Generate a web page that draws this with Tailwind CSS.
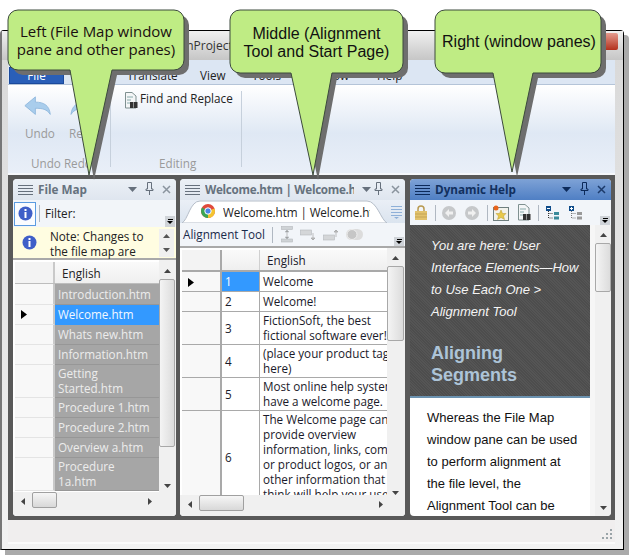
<!DOCTYPE html>
<html lang="en">
<head>
  <meta charset="UTF-8" />
  <title>Window panes</title>
  <script src="https://cdn.jsdelivr.net/npm/@tailwindcss/browser@4"></script>
</head>
<body class="bg-white">
<div class="relative w-[629px] h-[556px] overflow-hidden font-['Open_Sans',sans-serif] text-[11.7px] text-black">

  <!-- shadow + window -->
  <div class="mt-[30px] ml-0 w-[624px] h-[520px] border border-l-[2px] border-black border-l-[#777] bg-[linear-gradient(#d8d8d8,#f2f2f2)] rounded-t-[4px] shadow-[5px_5px_0_#aaaaaa] flex flex-col pl-[6px] pr-[8px]">

    <!-- title bar -->
    <div class="h-[29px] shrink-0 relative bg-[linear-gradient(#f0f0f0,#c6c6c6)] -ml-[6px] -mr-[8px] px-[8px]">
      <div class="pl-[156px] pt-[6px] text-[#333] text-[12px]">AlignProject</div>
      <div class="absolute left-[598px] top-[2px] w-[18px] h-[17px] rounded-[2px] bg-[linear-gradient(#e49b8e,#b3301d)]"></div>
    </div>

    <!-- ribbon tabs -->
    <div class="h-[25px] shrink-0 bg-[#dce6f3] border-b border-[#b4c4d8] flex items-end relative">
      <div class="ml-[1px] w-[55px] h-[17px] bg-[#2a5fb8] border border-[#1b4a9c] text-white text-center leading-[15px]">File</div>
      <div class="absolute left-[119px] top-[7px] text-[#222]">Translate</div>
      <div class="absolute left-[192px] top-[7px] text-[#222]">View</div>
      <div class="absolute left-[244px] top-[7px] text-[#222]">Tools</div>
      <div class="absolute left-[297px] top-[7px] text-[#222]">Window</div>
      <div class="absolute left-[369px] top-[7px] text-[#222]">Help</div>
    </div>

    <!-- ribbon -->
    <div class="h-[90px] shrink-0 flex border-b-[2px] border-[#f6f8fb] bg-[linear-gradient(#ffffff,#dfe8f4_55%,#e9eff8)]">
      <div class="w-[103px] shrink-0 relative border-r border-[#c6d0dc] my-[6px]">
        <svg class="absolute left-[15px] top-[5px]" width="30" height="21" viewBox="0 0 32 24"><path d="M1 11 L13 1 V7 C23 7 29 11 30 21 C26 15 21 14 13 14 V21 Z" fill="#a9cdec" stroke="#8db6dc"/></svg>
        <svg class="absolute left-[60px] top-[5px]" width="20" height="21" viewBox="0 0 20 24"><path d="M2 21 C3 11 9 7 19 7 V14 C11 14 6 15 2 21 Z" fill="#a9cdec" stroke="#8db6dc"/></svg>
        <div class="absolute left-[17px] top-[34px] text-[#9a9a9a]">Undo</div>
        <div class="absolute left-[61px] top-[34px] text-[#9a9a9a]">Redo</div>
        <div class="absolute left-[23px] top-[64px] text-[#9a9a9a] whitespace-nowrap">Undo Redo</div>
      </div>
      <div class="w-[131px] shrink-0 relative border-r border-[#c6d0dc] my-[6px]">
        <svg class="absolute left-[13px] top-[1px]" width="15" height="17" viewBox="0 0 15 17"><path d="M1.500 .5 H8 L12 4 V16 H1.500 Z" fill="#f4f6f7" stroke="#7f9090"/><path d="M3 5 H9 M3 8 H7 M3 11 H6" stroke="#8aa"/><rect x="6" y="10" width="3.500" height="6" fill="#333"/><rect x="10" y="10" width="3.500" height="6" fill="#333"/></svg>
        <div class="absolute left-[29px] top-[-1px] text-[#222] whitespace-nowrap">Find and Replace</div>
        <div class="absolute left-[48px] top-[64px] text-[#9a9a9a]">Editing</div>
      </div>
    </div>

    <!-- pane area -->
    <div class="h-[345px] shrink-0 bg-[#595959] flex gap-[4px] pl-[5px] pr-[5px] pt-[4px] pb-[4px]">

      <!-- left pane -->
      <div class="w-[163px] shrink-0 bg-[#f0f3f7] rounded-[4px] flex flex-col overflow-hidden">
        <div class="h-[21px] shrink-0 flex items-center bg-[linear-gradient(#ebf0f6,#dfe6ef)] relative">
          <svg class="ml-[5px]" width="15" height="12" viewBox="0 0 15 12"><path d="M0 1.500H15M0 4.500H15M0 7.500H15M0 10.500H15" stroke="#66707c"/></svg>
          <span class="ml-[5px] font-bold text-[#66727e]">File Map</span>
          <svg class="absolute left-[115px] top-[8px]" width="9" height="5"><path d="M0 0H9L4.500 5Z" fill="#66707c"/></svg>
          <svg class="absolute left-[132px] top-[3px]" width="9" height="13" viewBox="0 0 9 13"><path d="M2.500 .5H6.500V7H8V8.500H1V7H2.500ZM4.500 8.500V13" fill="none" stroke="#66707c"/></svg>
          <svg class="absolute left-[149px] top-[6px]" width="9" height="9" viewBox="0 0 9 9"><path d="M1 1L8 8M8 1L1 8" stroke="#8a949e" stroke-width="1.500"/></svg>
        </div>
        <div class="h-[27px] shrink-0 flex items-center bg-[#f2f5f9] relative">
          <div class="ml-[1px] w-[22px] h-[24px] border border-[#5b9be0] bg-[#fafcff] flex items-center justify-center">
            <svg width="15" height="15" viewBox="0 0 15 15"><circle cx="7.500" cy="7.500" r="7" fill="#3f5fc8"/><rect x="6.500" y="3" width="2" height="2" fill="#fff"/><rect x="6.500" y="6" width="2" height="6" fill="#fff"/></svg>
          </div>
          <div class="ml-[3px] w-px h-[17px] bg-[#b0b8c2]"></div>
          <span class="ml-[5px] text-[#222]">Filter:</span>
          <div class="absolute right-[1px] bottom-0 w-[10px] h-[11px] bg-[#cfd3d8] flex flex-col items-center justify-center gap-[1px]">
            <div class="w-[5px] h-px bg-black"></div>
            <svg width="6" height="3"><path d="M0 0H6L3 3Z"/></svg>
          </div>
        </div>
        <div class="h-[33px] shrink-0 flex bg-[#fffde1] relative border-b-[2px] border-[#a9a9a9]">
          <svg class="absolute left-[9px] top-[8px]" width="15" height="15" viewBox="0 0 15 15"><circle cx="7.500" cy="7.500" r="7" fill="#3f5fc8"/><rect x="6.500" y="3" width="2" height="2" fill="#fff"/><rect x="6.500" y="6" width="2" height="6" fill="#fff"/></svg>
          <div class="ml-[37px] pt-[2px] w-[105px] leading-[15px] text-[#222]">Note: Changes to the file map are</div>
          <div class="absolute right-[2px] top-[2px] w-[15px] h-[28px] bg-[#f0f0f0] flex flex-col items-center justify-between py-[5px]">
            <svg width="7" height="4"><path d="M0 4H7L3.500 0Z" fill="#555"/></svg>
            <svg width="7" height="4"><path d="M0 0H7L3.500 4Z" fill="#555"/></svg>
          </div>
        </div>
        <div class="flex-1 flex min-h-0 pl-[2px] pt-[2px] bg-white relative">
          <div class="w-[144px] shrink-0 text-[#ececec] leading-[15px]">
            <div class="flex h-[22px] border-b border-[#bdbdbd] bg-[linear-gradient(#fafafa,#efefef)]">
              <div class="w-[40px] border-r-[2px] border-[#c9c9c9] bg-[#f3f3f3]"></div>
              <div class="pl-[7px] pt-[4px] flex-1 text-[#222]">English</div>
            </div>
            <div class="flex h-[21px]"><div class="w-[40px] shrink-0 bg-[#f8f8f8] border-b border-[#e4e4e4] border-r-[2px] border-r-[#c9c9c9]"></div><div class="flex-1 bg-[#a6a6a6] border-b border-[#979797] pl-[3px] pt-[3px] whitespace-nowrap">Introduction.htm</div></div>
            <div class="flex h-[20px]"><div class="w-[40px] shrink-0 bg-[#f8f8f8] border-b border-[#e4e4e4] border-r-[2px] border-r-[#c9c9c9] relative"><svg class="absolute left-[6px] top-[5px]" width="6" height="9"><path d="M0 0L6 4.500L0 9Z"/></svg></div><div class="flex-1 bg-[#3399ff] pl-[3px] pt-[2px] text-[#f2f8ff]">Welcome.htm</div></div>
            <div class="flex h-[20px]"><div class="w-[40px] shrink-0 bg-[#f8f8f8] border-b border-[#e4e4e4] border-r-[2px] border-r-[#c9c9c9]"></div><div class="flex-1 bg-[#a6a6a6] border-b border-[#979797] pl-[3px] pt-[2px]">Whats new.htm</div></div>
            <div class="flex h-[20px]"><div class="w-[40px] shrink-0 bg-[#f8f8f8] border-b border-[#e4e4e4] border-r-[2px] border-r-[#c9c9c9]"></div><div class="flex-1 bg-[#a6a6a6] border-b border-[#979797] pl-[3px] pt-[2px]">Information.htm</div></div>
            <div class="flex h-[33px]"><div class="w-[40px] shrink-0 bg-[#f8f8f8] border-b border-[#e4e4e4] border-r-[2px] border-r-[#c9c9c9]"></div><div class="flex-1 bg-[#a6a6a6] border-b border-[#979797] pl-[3px] pt-[1px]">Getting<br>Started.htm</div></div>
            <div class="flex h-[20px]"><div class="w-[40px] shrink-0 bg-[#f8f8f8] border-b border-[#e4e4e4] border-r-[2px] border-r-[#c9c9c9]"></div><div class="flex-1 bg-[#a6a6a6] border-b border-[#979797] pl-[3px] pt-[2px]">Procedure 1.htm</div></div>
            <div class="flex h-[20px]"><div class="w-[40px] shrink-0 bg-[#f8f8f8] border-b border-[#e4e4e4] border-r-[2px] border-r-[#c9c9c9]"></div><div class="flex-1 bg-[#a6a6a6] border-b border-[#979797] pl-[3px] pt-[2px]">Procedure 2.htm</div></div>
            <div class="flex h-[20px]"><div class="w-[40px] shrink-0 bg-[#f8f8f8] border-b border-[#e4e4e4] border-r-[2px] border-r-[#c9c9c9]"></div><div class="flex-1 bg-[#a6a6a6] border-b border-[#979797] pl-[3px] pt-[2px]">Overview a.htm</div></div>
            <div class="flex h-[33px]"><div class="w-[40px] shrink-0 bg-[#f8f8f8] border-b border-[#e4e4e4] border-r-[2px] border-r-[#c9c9c9]"></div><div class="flex-1 bg-[#a6a6a6] border-b border-[#979797] pl-[3px] pt-[1px]">Procedure<br>1a.htm</div></div>
          </div>
          <div class="absolute left-[146px] right-0 top-0 bottom-0 bg-[#f0f0f0]">
            <svg class="absolute left-[5px] top-[9px]" width="7" height="4"><path d="M0 4H7L3.500 0Z" fill="#444"/></svg>
            <div class="absolute left-0 right-[1px] top-[19px] h-[168px] rounded-[2px] border border-[#a8a8a8] bg-[linear-gradient(90deg,#f4f4f4,#dcdcdc)]"></div>
            <svg class="absolute left-[5px] bottom-[28px]" width="7" height="4"><path d="M0 0H7L3.500 4Z" fill="#444"/></svg>
          </div>
          <div class="absolute left-0 right-0 bottom-0 h-[24px] bg-[#f0f0f0]">
            <svg class="absolute left-[8px] top-[6px]" width="4" height="7"><path d="M4 0V7L0 3.500Z" fill="#444"/></svg>
            <div class="absolute left-[19px] top-0 w-[25px] h-[16px] rounded-[2px] border border-[#a0a0a0] bg-[linear-gradient(#f6f6f6,#d8d8d8)]"></div>
            <svg class="absolute left-[135px] top-[6px]" width="4" height="7"><path d="M0 0V7L4 3.500Z" fill="#444"/></svg>
          </div>
        </div>
      </div>

      <!-- middle pane -->
      <div class="w-[225px] shrink-0 bg-[#f0f3f7] rounded-[4px] flex flex-col overflow-hidden">
        <div class="h-[21px] shrink-0 flex items-center bg-[linear-gradient(#ebf0f6,#dfe6ef)] relative">
          <svg class="ml-[5px] shrink-0" width="15" height="12" viewBox="0 0 15 12"><path d="M0 1.500H15M0 4.500H15M0 7.500H15M0 10.500H15" stroke="#66707c"/></svg>
          <span class="ml-[5px] font-bold text-[#66727e] w-[149px] overflow-hidden whitespace-nowrap tracking-[-0.3px]">Welcome.htm | Welcome.htm</span>
          <svg class="absolute left-[182px] top-[8px]" width="9" height="5"><path d="M0 0H9L4.500 5Z" fill="#66707c"/></svg>
          <svg class="absolute left-[194px] top-[3px]" width="9" height="13" viewBox="0 0 9 13"><path d="M2.500 .5H6.500V7H8V8.500H1V7H2.500ZM4.500 8.500V13" fill="none" stroke="#66707c"/></svg>
          <svg class="absolute left-[211px] top-[6px]" width="9" height="9" viewBox="0 0 9 9"><path d="M1 1L8 8M8 1L1 8" stroke="#8a949e" stroke-width="1.500"/></svg>
        </div>
        <div class="h-[23px] shrink-0 relative bg-[linear-gradient(#eaeff6,#dbe4ef)]">
          <svg class="absolute left-[2px] top-0" width="205" height="23" viewBox="0 0 205 23"><path d="M0 23C6 20 8 1 18 1H185C195 1 199 20 205 23Z" fill="#fff" stroke="#b5bdc8"/></svg>
          <svg class="absolute left-[21px] top-[4px]" width="14" height="14" viewBox="0 0 14 14"><circle cx="7" cy="7" r="7" fill="#e04a3b"/><path d="M7 7L1 3.500A7 7 0 0 0 7 14Z" fill="#3aa655"/><path d="M7 7L13.500 4.500A7 7 0 0 1 7 14Z" fill="#f4c430"/><circle cx="7" cy="7" r="3.200" fill="#4a86e8" stroke="#fff"/></svg>
          <div class="absolute left-[43px] top-[4px] w-[147px] overflow-hidden whitespace-nowrap text-[#222] tracking-[-0.1px]">Welcome.htm | Welcome.htm</div>
          <svg class="absolute left-[211px] top-[5px]" width="11" height="14" viewBox="0 0 11 14"><path d="M0 1.500H11M0 4.500H11M0 7.500H11M0 10.500H11" stroke="#8fb0d8"/><path d="M3 12H8L5.500 14Z" fill="#8fb0d8"/></svg>
        </div>
        <div class="h-[25px] shrink-0 flex items-center bg-[#f2f5f9] relative border-b-[2px] border-[#a9a9a9]">
          <span class="ml-[3px] text-[#1a2a4a]">Alignment Tool</span>
          <div class="ml-[7px] w-px h-[16px] bg-[#b0b8c2]"></div>
          <svg class="ml-[8px]" width="12" height="17" viewBox="0 0 12 17" fill="#cfd3d6" stroke="#b4b8bc" stroke-width=".6"><rect x=".5" y=".5" width="11" height="3"/><rect x=".5" y="13" width="11" height="3"/><path d="M6 4V13" stroke="#999"/><path d="M4 6H8L6 4ZM4 11H8L6 13Z" fill="#999"/></svg>
          <svg class="ml-[7px]" width="16" height="12" viewBox="0 0 16 12" fill="#d4d6d8" stroke="#b4b8bc" stroke-width=".6"><rect x=".5" y="1" width="11" height="5"/><path d="M13 4V11M11 9H15L13 11Z" stroke="#999"/></svg>
          <svg class="ml-[7px]" width="16" height="12" viewBox="0 0 16 12" fill="#d4d6d8" stroke="#b4b8bc" stroke-width=".6"><rect x=".5" y="6" width="11" height="5"/><path d="M13 8V1M11 3H15L13 1Z" stroke="#999"/></svg>
          <svg class="ml-[7px]" width="17" height="11" viewBox="0 0 17 11"><rect width="17" height="11" rx="5.500" fill="#dcdcdc"/><circle cx="6" cy="5.500" r="5" fill="#c6c6c6" stroke="#eee"/></svg>
          <div class="absolute right-[1px] bottom-0 w-[10px] h-[9px] bg-[#cfd3d8] flex flex-col items-center justify-center gap-[1px]">
            <div class="w-[5px] h-px bg-black"></div>
            <svg width="6" height="3"><path d="M0 0H6L3 3Z"/></svg>
          </div>
        </div>
        <div class="flex-1 flex min-h-0 pl-[2px] pt-[2px] bg-white relative">
          <div class="w-[205px] shrink-0 leading-[15px] text-[#1a1a2a] overflow-hidden h-[245px]">
            <div class="flex h-[22px] border-b-[2px] border-[#a9a9a9] bg-[linear-gradient(#fafafa,#efefef)]">
              <div class="w-[40px] shrink-0 border-r-[2px] border-[#a9a9a9] bg-[#f3f3f3]"></div>
              <div class="w-[38px] shrink-0 border-r border-[#d0d0d0]"></div>
              <div class="pl-[7px] pt-[3px]">English</div>
            </div>
            <div class="flex h-[20px] border-b border-[#a9a9a9]"><div class="w-[40px] shrink-0 bg-[#f8f8f8] border-r-[2px] border-[#a9a9a9] relative"><svg class="absolute left-[6px] top-[6px]" width="6" height="9"><path d="M0 0L6 4.500L0 9Z"/></svg></div><div class="w-[38px] shrink-0 bg-[#3399ff] border-r border-[#a9a9a9] text-white pl-[3px] pt-[2px]">1</div><div class="pl-[3px] pt-[2px] whitespace-nowrap">Welcome</div></div>
            <div class="flex h-[20px] border-b border-[#a9a9a9]"><div class="w-[40px] shrink-0 bg-[#f8f8f8] border-r-[2px] border-[#a9a9a9]"></div><div class="w-[38px] shrink-0 border-r border-[#a9a9a9] pl-[3px] pt-[2px]">2</div><div class="pl-[3px] pt-[2px] whitespace-nowrap">Welcome!</div></div>
            <div class="flex h-[33px] border-b border-[#a9a9a9]"><div class="w-[40px] shrink-0 bg-[#f8f8f8] border-r-[2px] border-[#a9a9a9]"></div><div class="w-[38px] shrink-0 border-r border-[#a9a9a9] pl-[3px] flex items-center">3</div><div class="pl-[3px] pt-[1px] whitespace-nowrap overflow-hidden w-[127px]">FictionSoft, the best<br>fictional software ever!</div></div>
            <div class="flex h-[33px] border-b border-[#a9a9a9]"><div class="w-[40px] shrink-0 bg-[#f8f8f8] border-r-[2px] border-[#a9a9a9]"></div><div class="w-[38px] shrink-0 border-r border-[#a9a9a9] pl-[3px] flex items-center">4</div><div class="pl-[3px] pt-[1px] whitespace-nowrap overflow-hidden w-[127px]">(place your product tagline<br>here)</div></div>
            <div class="flex h-[33px] border-b border-[#a9a9a9]"><div class="w-[40px] shrink-0 bg-[#f8f8f8] border-r-[2px] border-[#a9a9a9]"></div><div class="w-[38px] shrink-0 border-r border-[#a9a9a9] pl-[3px] flex items-center">5</div><div class="pl-[3px] pt-[1px] whitespace-nowrap overflow-hidden w-[127px]">Most online help systems<br>have a welcome page.</div></div>
            <div class="flex h-[93px]"><div class="w-[40px] shrink-0 bg-[#f8f8f8] border-r-[2px] border-[#a9a9a9]"></div><div class="w-[38px] shrink-0 border-r border-[#a9a9a9] pl-[3px] flex items-center">6</div><div class="pl-[3px] pt-[1px] whitespace-nowrap overflow-hidden w-[127px]">The Welcome page can<br>provide overview<br>information, links, company<br>or product logos, or any<br>other information that you<br>think will help your users.</div></div>
          </div>
          <div class="absolute left-[207px] right-0 top-0 bottom-0 bg-[#f0f0f0]">
            <svg class="absolute left-[5px] top-[8px]" width="7" height="4"><path d="M0 4H7L3.500 0Z" fill="#444"/></svg>
            <div class="absolute left-0 right-[1px] top-[18px] h-[75px] rounded-[2px] border border-[#a8a8a8] bg-[linear-gradient(90deg,#f4f4f4,#dcdcdc)]"></div>
            <svg class="absolute left-[5px] bottom-[21px]" width="7" height="4"><path d="M0 0H7L3.500 4Z" fill="#444"/></svg>
          </div>
          <div class="absolute left-0 right-0 bottom-0 h-[21px] bg-[#f0f0f0]">
            <svg class="absolute left-[8px] top-[6px]" width="4" height="7"><path d="M4 0V7L0 3.500Z" fill="#444"/></svg>
            <div class="absolute left-[19px] top-0 w-[45px] h-[16px] rounded-[2px] border border-[#a0a0a0] bg-[linear-gradient(#f6f6f6,#d8d8d8)]"></div>
            <svg class="absolute left-[199px] top-[6px]" width="4" height="7"><path d="M0 0V7L4 3.500Z" fill="#444"/></svg>
          </div>
        </div>
      </div>

      <!-- right pane -->
      <div class="w-[201px] shrink-0 ml-[1px] bg-white rounded-[4px] flex flex-col overflow-hidden">
        <div class="h-[21px] shrink-0 flex items-center bg-[linear-gradient(#7ea2d6,#4f7fc4)] relative">
          <svg class="ml-[5px]" width="15" height="12" viewBox="0 0 15 12"><path d="M0 1.500H15M0 4.500H15M0 7.500H15M0 10.500H15" stroke="#0c2a5a"/></svg>
          <span class="ml-[5px] font-bold text-[#12305e]">Dynamic Help</span>
          <svg class="absolute left-[152px] top-[8px]" width="9" height="5"><path d="M0 0H9L4.500 5Z" fill="#0c2a5a"/></svg>
          <svg class="absolute left-[170px] top-[3px]" width="9" height="13" viewBox="0 0 9 13"><path d="M2.500 .5H6.500V7H8V8.500H1V7H2.500ZM4.500 8.500V13" fill="none" stroke="#0c2a5a"/></svg>
          <svg class="absolute left-[187px] top-[6px]" width="9" height="9" viewBox="0 0 9 9"><path d="M1 1L8 8M8 1L1 8" stroke="#1c3a6a" stroke-width="1.500"/></svg>
        </div>
        <div class="h-[25px] shrink-0 flex items-center bg-[#f2f5f9] relative pl-[5px]">
          <svg width="12" height="15" viewBox="0 0 12 15"><path d="M3 7V4A3 3 0 0 1 9 4V7" fill="none" stroke="#b89a50" stroke-width="1.500"/><rect y="6" width="12" height="9" fill="#e2c26c"/><path d="M0 9H12M0 12H12" stroke="#c4a454"/></svg>
          <div class="ml-[8px] w-px h-[16px] bg-[#b0b8c2]"></div>
          <svg class="ml-[6px]" width="14" height="14" viewBox="0 0 14 14"><circle cx="7" cy="7" r="7" fill="#c6c8ca"/><path d="M3 7L7 3V5.500H11V8.500H7V11Z" fill="#f0f0f0"/></svg>
          <svg class="ml-[9px]" width="14" height="14" viewBox="0 0 14 14"><circle cx="7" cy="7" r="7" fill="#c6c8ca"/><path d="M11 7L7 3V5.500H3V8.500H7V11Z" fill="#f0f0f0"/></svg>
          <div class="ml-[8px] w-px h-[16px] bg-[#b0b8c2]"></div>
          <svg class="ml-[5px]" width="16" height="16" viewBox="0 0 16 16"><rect x=".5" y="2.500" width="15" height="13" fill="#f2f2ec" stroke="#6f7f7f"/><path d="M8 5L9.500 8.500H13L10.500 11L11.500 14.500L8 12.500L4.500 14.500L5.500 11L3 8.500H6.500Z" fill="#e8c94a" stroke="#b89a30" stroke-width=".5"/><circle cx="3" cy="3" r="2.500" fill="#e8641c"/></svg>
          <svg class="ml-[8px]" width="15" height="17" viewBox="0 0 15 17"><path d="M1.500 .5H8L12 4V16H1.500Z" fill="#f4f6f7" stroke="#7f9090"/><path d="M3 5H9M3 8H7M3 11H6" stroke="#8aa"/><rect x="6" y="10" width="3.500" height="6" fill="#333"/><rect x="10" y="10" width="3.500" height="6" fill="#333"/></svg>
          <div class="ml-[6px] w-px h-[16px] bg-[#b0b8c2]"></div>
          <svg class="ml-[7px]" width="14" height="14" viewBox="0 0 14 14"><rect width="5" height="5" fill="#0f4c8a"/><rect x="1" y="2" width="3" height="1" fill="#fff"/><rect x="8" y="6" width="5" height="3" fill="#3a8a9a"/><rect x="8" y="10.500" width="5" height="3" fill="#3a8a9a"/><path d="M2.500 5V12H7M2.500 7.500H7" stroke="#333" stroke-dasharray="1 1" fill="none"/></svg>
          <svg class="ml-[9px]" width="14" height="14" viewBox="0 0 14 14"><rect width="5" height="5" fill="#0f4c8a"/><path d="M1 2.500H4M2.500 1V4" stroke="#fff"/><rect x="8" y="6" width="5" height="3" fill="#999"/><rect x="8" y="10.500" width="5" height="3" fill="#999"/><path d="M2.500 5V12H7M2.500 7.500H7" stroke="#777" stroke-dasharray="1 1" fill="none"/></svg>
          <div class="absolute right-[1px] bottom-0 w-[10px] h-[9px] bg-[#cfd3d8] flex flex-col items-center justify-center gap-[1px]">
            <div class="w-[5px] h-px bg-black"></div>
            <svg width="6" height="3"><path d="M0 0H6L3 3Z"/></svg>
          </div>
        </div>
        <div class="flex-1 flex min-h-0 font-['Liberation_Sans',sans-serif] text-[13px]">
          <div class="w-[180px] shrink-0 overflow-hidden">
            <div class="h-[173px] border-b-[2px] border-[#6b92b0] bg-[repeating-linear-gradient(45deg,#4d4d4d_0,#4d4d4d_1px,#555555_1px,#555555_2px)] pl-[21px] pt-[10px]">
              <div class="italic text-[#f4f4f4] leading-[22px] whitespace-nowrap">You are here: User<br>Interface Elements—How<br>to Use Each One &gt;<br>Alignment Tool</div>
              <div class="mt-[19px] font-bold text-[18px] leading-[22px] text-[#adc4d8]">Aligning<br>Segments</div>
            </div>
            <div class="pl-[17px] pt-[9px] leading-[22px] text-[#111] whitespace-nowrap">Whereas the File Map<br>window pane can be used<br>to perform alignment at<br>the file level, the<br>Alignment Tool can be</div>
          </div>
          <div class="w-[5px] shrink-0 bg-[#f6f6f6]"></div>
          <div class="flex-1 bg-[#f0f0f0] relative">
            <svg class="absolute left-[5px] top-[8px]" width="7" height="4"><path d="M0 4H7L3.500 0Z" fill="#444"/></svg>
            <div class="absolute left-0 right-0 top-[18px] h-[49px] rounded-[2px] border border-[#a8a8a8] bg-[linear-gradient(90deg,#f4f4f4,#dcdcdc)]"></div>
            <svg class="absolute left-[5px] bottom-[6px]" width="7" height="4"><path d="M0 0H7L3.500 4Z" fill="#444"/></svg>
          </div>
        </div>
      </div>
    </div>

    <!-- status bar -->
    <div class="h-[24px] shrink-0 bg-[#f0eeee] border-b-[2px] border-[#fafafa] relative">
      <svg class="absolute right-[2px] bottom-[2px]" width="11" height="11" viewBox="0 0 11 11" fill="#9aa4a8"><rect x="8" y="0" width="2" height="2"/><rect x="4" y="4" width="2" height="2"/><rect x="8" y="4" width="2" height="2"/><rect x="0" y="8" width="2" height="2"/><rect x="4" y="8" width="2" height="2"/><rect x="8" y="8" width="2" height="2"/></svg>
    </div>
  </div>

  <!-- callouts -->
  <svg class="absolute left-0 top-0" width="629" height="556" viewBox="0 0 629 556">
    <g fill="#6e6e6e" transform="translate(5 5)">
      <path d="M18 10H174A10 10 0 0 1 184 20V60A10 10 0 0 1 174 70H112L89 175L70 70H18A10 10 0 0 1 8 60V20A10 10 0 0 1 18 10Z"/>
      <path d="M240 10H393A10 10 0 0 1 403 20V63A10 10 0 0 1 393 73H332L313 175L291 73H240A10 10 0 0 1 230 63V20A10 10 0 0 1 240 10Z"/>
      <path d="M445 10H591A10 10 0 0 1 601 20V63A10 10 0 0 1 591 73H533L512 172L493 73H445A10 10 0 0 1 435 63V20A10 10 0 0 1 445 10Z"/>
    </g>
    <g fill="#bfec84" stroke="#3c4a3c" stroke-width="1">
      <path d="M18 10H174A10 10 0 0 1 184 20V60A10 10 0 0 1 174 70H112L89 175L70 70H18A10 10 0 0 1 8 60V20A10 10 0 0 1 18 10Z"/>
      <path d="M240 10H393A10 10 0 0 1 403 20V63A10 10 0 0 1 393 73H332L313 175L291 73H240A10 10 0 0 1 230 63V20A10 10 0 0 1 240 10Z"/>
      <path d="M445 10H591A10 10 0 0 1 601 20V63A10 10 0 0 1 591 73H533L512 172L493 73H445A10 10 0 0 1 435 63V20A10 10 0 0 1 445 10Z"/>
    </g>
  </svg>
  <div class="absolute left-[8px] top-[22px] w-[176px] text-center text-[15px] leading-[18px] text-[#1a0f0f]">Left (File Map window<br>pane and other panes)</div>
  <div class="absolute left-[230px] top-[25px] w-[173px] text-center font-['Liberation_Sans',sans-serif] text-[16px] leading-[18px] text-[#111]">Middle (Alignment<br>Tool and Start Page)</div>
  <div class="absolute left-[435px] top-[33px] w-[168px] text-center font-['Liberation_Sans',sans-serif] text-[16px] leading-[18px] text-[#111] whitespace-nowrap">Right (window panes)</div>
</div>
</body>
</html>
